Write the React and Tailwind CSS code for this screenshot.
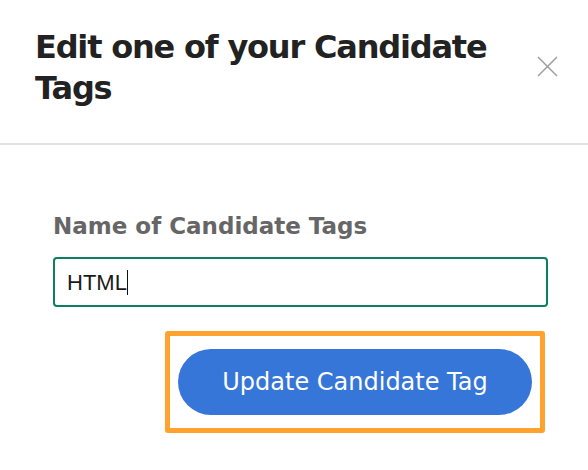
export default function App() {
  return (
    <div className="w-[588px] h-[470px] bg-white overflow-hidden [font-family:'DejaVu_Sans',Verdana,sans-serif]">
      <div className="flex items-start justify-between h-[145px] border-b-2 border-[#e3e3e3] pl-[35px] pr-[30px] pt-[27px]">
        <h1 className="text-[32px] leading-[41px] font-bold text-[#222] tracking-[-1.2px] w-[470px]">
          Edit one of your Candidate Tags
        </h1>
        <button className="mt-[28px] w-[22px] h-[22px] flex items-center justify-center">
          <svg width="21" height="21" viewBox="0 0 21 21" fill="none" stroke="#9e9e9e" strokeWidth="1.5">
            <path d="M1 1 L20 20 M20 1 L1 20" />
          </svg>
        </button>
      </div>
      <div className="pl-[53px] pr-[40px] pt-[66px]">
        <label className="block text-[23px] leading-[30px] font-bold text-[#666]">Name of Candidate Tags</label>
        <div className="mt-[16px] h-[50px] w-[495px] border-2 border-[#0b7f5f] rounded-[4px] flex items-center px-[12px]">
          <span className="text-[22px] text-[#1a1a1a] [font-family:'Liberation_Sans',Arial,sans-serif]">HTML</span>
          <span className="w-[1.5px] h-[25px] bg-[#111]"></span>
        </div>
        <div className="flex justify-end mt-[24px] mr-[3px]">
          <div className="border-[5px] border-[#ffa22e] rounded-[3px] px-[8px] py-[13px]">
            <button className="h-[66px] w-[354px] rounded-full bg-[#3676d9] text-white text-[24px] font-normal">
              Update Candidate Tag
            </button>
          </div>
        </div>
      </div>
    </div>
  );
}
